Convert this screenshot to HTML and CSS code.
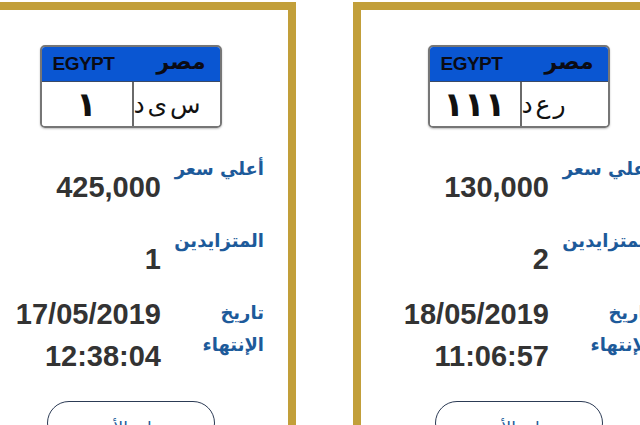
FILE: index.html
```html
<!DOCTYPE html>
<html lang="ar">
<head>
<meta charset="utf-8">
<title>Plates</title>
<link rel="stylesheet" href="styles.css">
</head>
<body>
<div class="row">
  <div class="card">
    <div class="plate">
      <div class="plate-head"><span class="en">EGYPT</span><span class="ar">مصر</span></div>
      <div class="plate-body"><div class="num">١</div><div class="let">س ى د</div></div>
    </div>
    <div class="info">
      <div class="line"><span class="label">أعلي سعر</span><span class="value low">425,000</span></div>
      <div class="line"><span class="label">المتزايدين</span><span class="value low">1</span></div>
      <div class="line"><span class="label two">تاريخ<br>الإنتهاء</span><span class="value tall">17/05/2019<br>12:38:04</span></div>
    </div>
    <button class="bid">زايد الأن</button>
  </div>
  <div class="card">
    <div class="plate">
      <div class="plate-head"><span class="en">EGYPT</span><span class="ar">مصر</span></div>
      <div class="plate-body"><div class="num">١١١</div><div class="let">ر ع د</div></div>
    </div>
    <div class="info">
      <div class="line"><span class="label">أعلي سعر</span><span class="value low">130,000</span></div>
      <div class="line"><span class="label">المتزايدين</span><span class="value low">2</span></div>
      <div class="line"><span class="label two">تاريخ<br>الإنتهاء</span><span class="value tall">18/05/2019<br>11:06:57</span></div>
    </div>
    <button class="bid">زايد الأن</button>
  </div>
</div>
</body>
</html>
```

FILE: styles.css
```css
html, body {
  margin: 0;
  padding: 0;
  background: #ffffff;
  overflow: hidden;
}
body {
  width: 640px;
  height: 425px;
  font-family: "DejaVu Sans", "Liberation Sans", sans-serif;
}
.row {
  display: flex;
  gap: 57px;
  margin: 2px 0 0 -35px;
}
.card {
  flex: none;
  box-sizing: border-box;
  width: 331px;
  height: 480px;
  border: 8px solid #c29f3a;
  padding-top: 35px;
  background: #fff;
}
.plate {
  width: 182px;
  box-sizing: border-box;
  margin: 0 auto;
  border: 2px solid #767676;
  border-radius: 5px;
  overflow: hidden;
  box-shadow: 0 1px 2px rgba(0,0,0,0.25);
}
.plate-head {
  height: 35px;
  box-sizing: border-box;
  background: #0a56d2;
  border-bottom: 1px solid #3b4a66;
  display: flex;
  align-items: center;
  justify-content: space-between;
  padding: 0 14px 0 11px;
}
.plate-head .en {
  font-family: "Liberation Sans", Arial, sans-serif;
  font-weight: bold;
  font-size: 19px;
  color: #0b0b14;
  letter-spacing: -0.5px;
}
.plate-head .ar {
  font-family: "DejaVu Sans", sans-serif;
  font-weight: bold;
  font-size: 22px;
  color: #0b0b14;
  line-height: 1;
  margin-top: -4px;
}
.plate-body {
  height: 44px;
  display: flex;
  background: #fff;
}
.plate-body .num {
  width: 90px;
  border-right: 2px solid #6a6a6a;
  display: flex;
  align-items: center;
  justify-content: center;
  font-family: "DejaVu Sans", sans-serif;
  font-weight: bold;
  font-size: 34px;
  line-height: 1;
  color: #111;
  letter-spacing: 1px;
}
.plate-body .let {
  flex: 1;
  display: flex;
  align-items: center;
  justify-content: flex-end;
  padding-right: 13px;
  font-family: "DejaVu Sans", sans-serif;
  font-size: 25px;
  color: #111;
  direction: rtl;
  word-spacing: -5px;
}
.info {
  margin-top: 27px;
  display: flex;
  flex-direction: column;
  gap: 24px;
}
.line {
  display: flex;
  direction: rtl;
  align-items: flex-start;
  padding-right: 24px;
}
.label {
  width: 95px;
  text-align: right;
  font-size: 18px;
  font-weight: bold;
  line-height: 28px;
  color: #1d5a9a;
  flex: none;
  white-space: nowrap;
}
.label.two {
  line-height: 32px;
  margin-top: -2px;
}
.value {
  direction: ltr;
  margin-right: 8px;
  font-family: "Liberation Sans", Arial, sans-serif;
  font-weight: bold;
  font-size: 29px;
  line-height: 32px;
  color: #333333;
  text-align: right;
}
.value.low {
  margin-top: 16px;
}
.value.tall {
  line-height: 42px;
  margin-top: -6px;
}
.bid {
  display: block;
  margin: 24px auto 0;
  width: 168px;
  height: 44px;
  box-sizing: border-box;
  border: 1.5px solid #2c3b55;
  border-radius: 22px;
  background: #fff;
  font-family: "DejaVu Sans", sans-serif;
  font-size: 17px;
  color: #1d5a9a;
  padding-top: 10px;
  direction: rtl;
}
```
